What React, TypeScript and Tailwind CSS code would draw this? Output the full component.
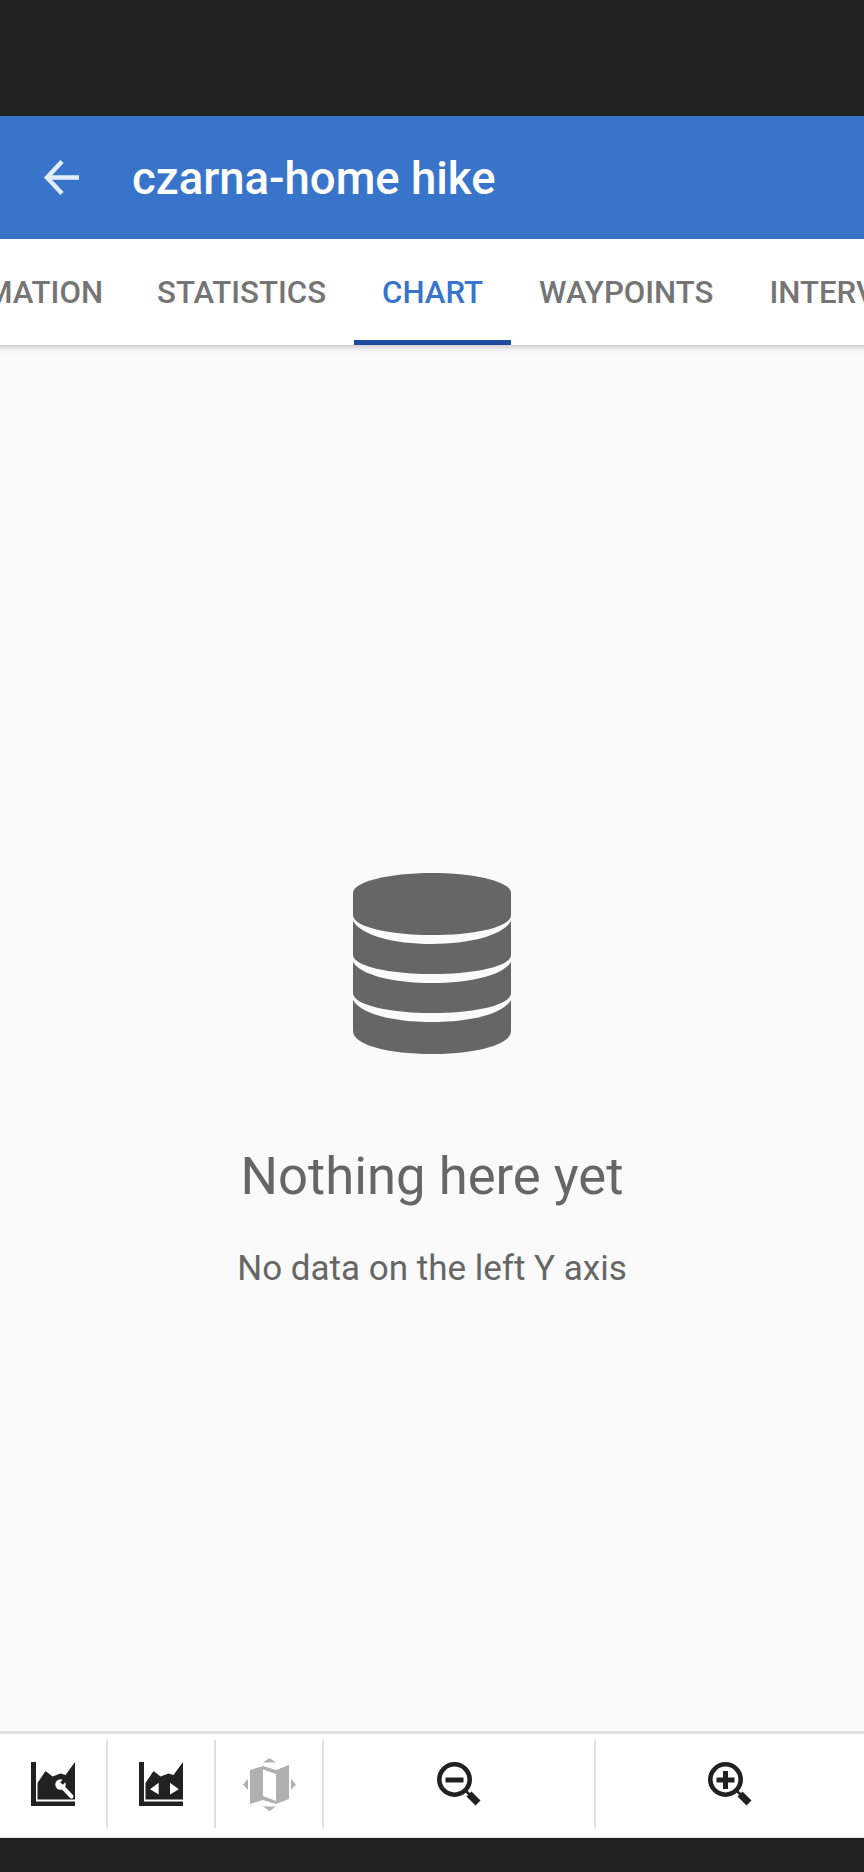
import clsx from "clsx";

const TABS = ["INFORMATION", "STATISTICS", "CHART", "WAYPOINTS", "INTERVALS"];

const AreaBase = () => (
  <>
    <path d="M0 0H5V39.5H44V44H0Z" />
    <path d="M6.5 21L14.5 9L21.5 14.5L29.5 11.5L34.5 13L44 0V37.5H6.5Z" />
  </>
);

const ChartSettingsIcon = () => (
  <svg width="44" height="44" viewBox="0 0 44 44" fill="#212121">
    <AreaBase />
    <circle cx="29.5" cy="22.5" r="5.2" fill="#fff" />
    <path d="M30.5 21.5L36 16" stroke="#212121" strokeWidth="3.6" />
    <path d="M31.5 25L40.5 34.5" stroke="#fff" strokeWidth="4" strokeLinecap="round" />
  </svg>
);

const ChartScrollIcon = () => (
  <svg width="44" height="44" viewBox="0 0 44 44" fill="#212121">
    <AreaBase />
    <path d="M11 27.3L19.7 20.7V32.5Z M31 20.7L39.8 27.3L31 32.5Z" fill="#fff" />
  </svg>
);

const MapMoveIcon = () => (
  <svg width="53" height="53" viewBox="0 0 53 53" fill="#b0b0b0">
    <path d="M7 12L20 8L33 12L46 7V41L33 46L20 42L7 46Z" />
    <path d="M20 11.5L33 16V43L20 38Z" fill="#fff" />
    <path d="M26.5 0L33 4.5H20Z M20 48.5H33L26.5 53Z M5 21V32L0 26.5Z M48 21L53 26.5L48 32Z" />
  </svg>
);

const ZoomIcon = ({ plus }: { plus?: boolean }) => (
  <svg width="44" height="44" viewBox="0 0 44 44" fill="none" stroke="#212121">
    <circle cx="17.5" cy="17.5" r="15.2" strokeWidth="4.6" />
    <path d="M29 29L33 33" strokeWidth="2.5" />
    <path d="M32 32L41 41" strokeWidth="7" />
    <path d="M8.5 18H26.5" strokeWidth="5" />
    {plus && <path d="M17.5 9V27" strokeWidth="5" />}
  </svg>
);

const DatabaseIcon = () => (
  <svg width="158" height="181" viewBox="0 0 158 181" fill="#666666">
    <path d="M0 20C0 9 35 0 79 0S158 9 158 20V42C158 54 122 62 79 62S0 54 0 42Z" />
    <path d="M0 48C8 62 40 71 79 71S150 62 158 48V82C158 93 122 101 79 101S0 93 0 82Z" />
    <path d="M0 89C8 102 40 110 79 110S150 102 158 89V120C158 132 122 140 79 140S0 132 0 120Z" />
    <path d="M0 127C8 141 40 149 79 149S150 141 158 127V158C158 172 122 181 79 181S0 172 0 158Z" />
  </svg>
);

const App = (): JSX.Element => (
  <div className="w-[864px] h-[1872px] flex flex-col overflow-hidden bg-[#212121] font-['Roboto',sans-serif]">
    <div className="h-[116px] shrink-0" />

    <header className="h-[123px] shrink-0 bg-[#3974cb] flex items-center pl-[43px]">
      <svg width="38" height="38" viewBox="0 0 38 38" fill="none" stroke="#e3ecf9" strokeWidth="4.5">
        <path d="M36 18.5H5" />
        <path d="M19 2.5L4 18.5L19 34.5" />
      </svg>
      <h1 className="ml-[51px] pt-[3px] text-[45.5px] font-medium text-white leading-none">czarna-home hike</h1>
    </header>

    <nav className="relative z-10 h-[106px] shrink-0 bg-white flex shadow-[0_2px_6px_rgba(0,0,0,0.22)] -ml-[132px] w-[1200px]">
      {TABS.map((t) => (
        <div
          key={t}
          className={clsx(
            "h-full flex items-center pt-[7px] text-[31.2px] font-medium border-b-[5px]",
            t === "INFORMATION" ? "pl-[28px] pr-[26px]" : "px-[28px]",
            t === "CHART" ? "text-[#3974cb] border-[#1e4a9e]" : "text-[#757575] border-transparent",
          )}
        >
          {t}
        </div>
      ))}
    </nav>

    <main className="flex-1 bg-[#fafafa] flex flex-col items-center pt-[528px] text-[#666666]">
      <DatabaseIcon />
      <h2 className="mt-[92px] text-[52.6px] leading-[60px]">Nothing here yet</h2>
      <p className="mt-[43px] text-[35px] leading-[40px]">No data on the left Y axis</p>
    </main>

    <footer className="h-[107px] shrink-0 bg-white border-t-[3px] border-b border-[#e0e0e0] flex items-center pb-[3px]">
      <div className="w-[108px] h-[88px] border-r-2 border-[#e0e0e0] flex items-center justify-center">
        <ChartSettingsIcon />
      </div>
      <div className="w-[108px] h-[88px] border-r-2 border-[#e0e0e0] flex items-center justify-center">
        <ChartScrollIcon />
      </div>
      <div className="w-[108px] h-[88px] border-r-2 border-[#e0e0e0] flex items-center justify-center">
        <MapMoveIcon />
      </div>
      <div className="flex-1 h-[88px] border-r-2 border-[#e0e0e0] flex items-center justify-center">
        <ZoomIcon />
      </div>
      <div className="w-[268px] h-[88px] flex items-center justify-center">
        <ZoomIcon plus />
      </div>
    </footer>

    <div className="h-[34px] shrink-0" />
  </div>
);

export default App;
